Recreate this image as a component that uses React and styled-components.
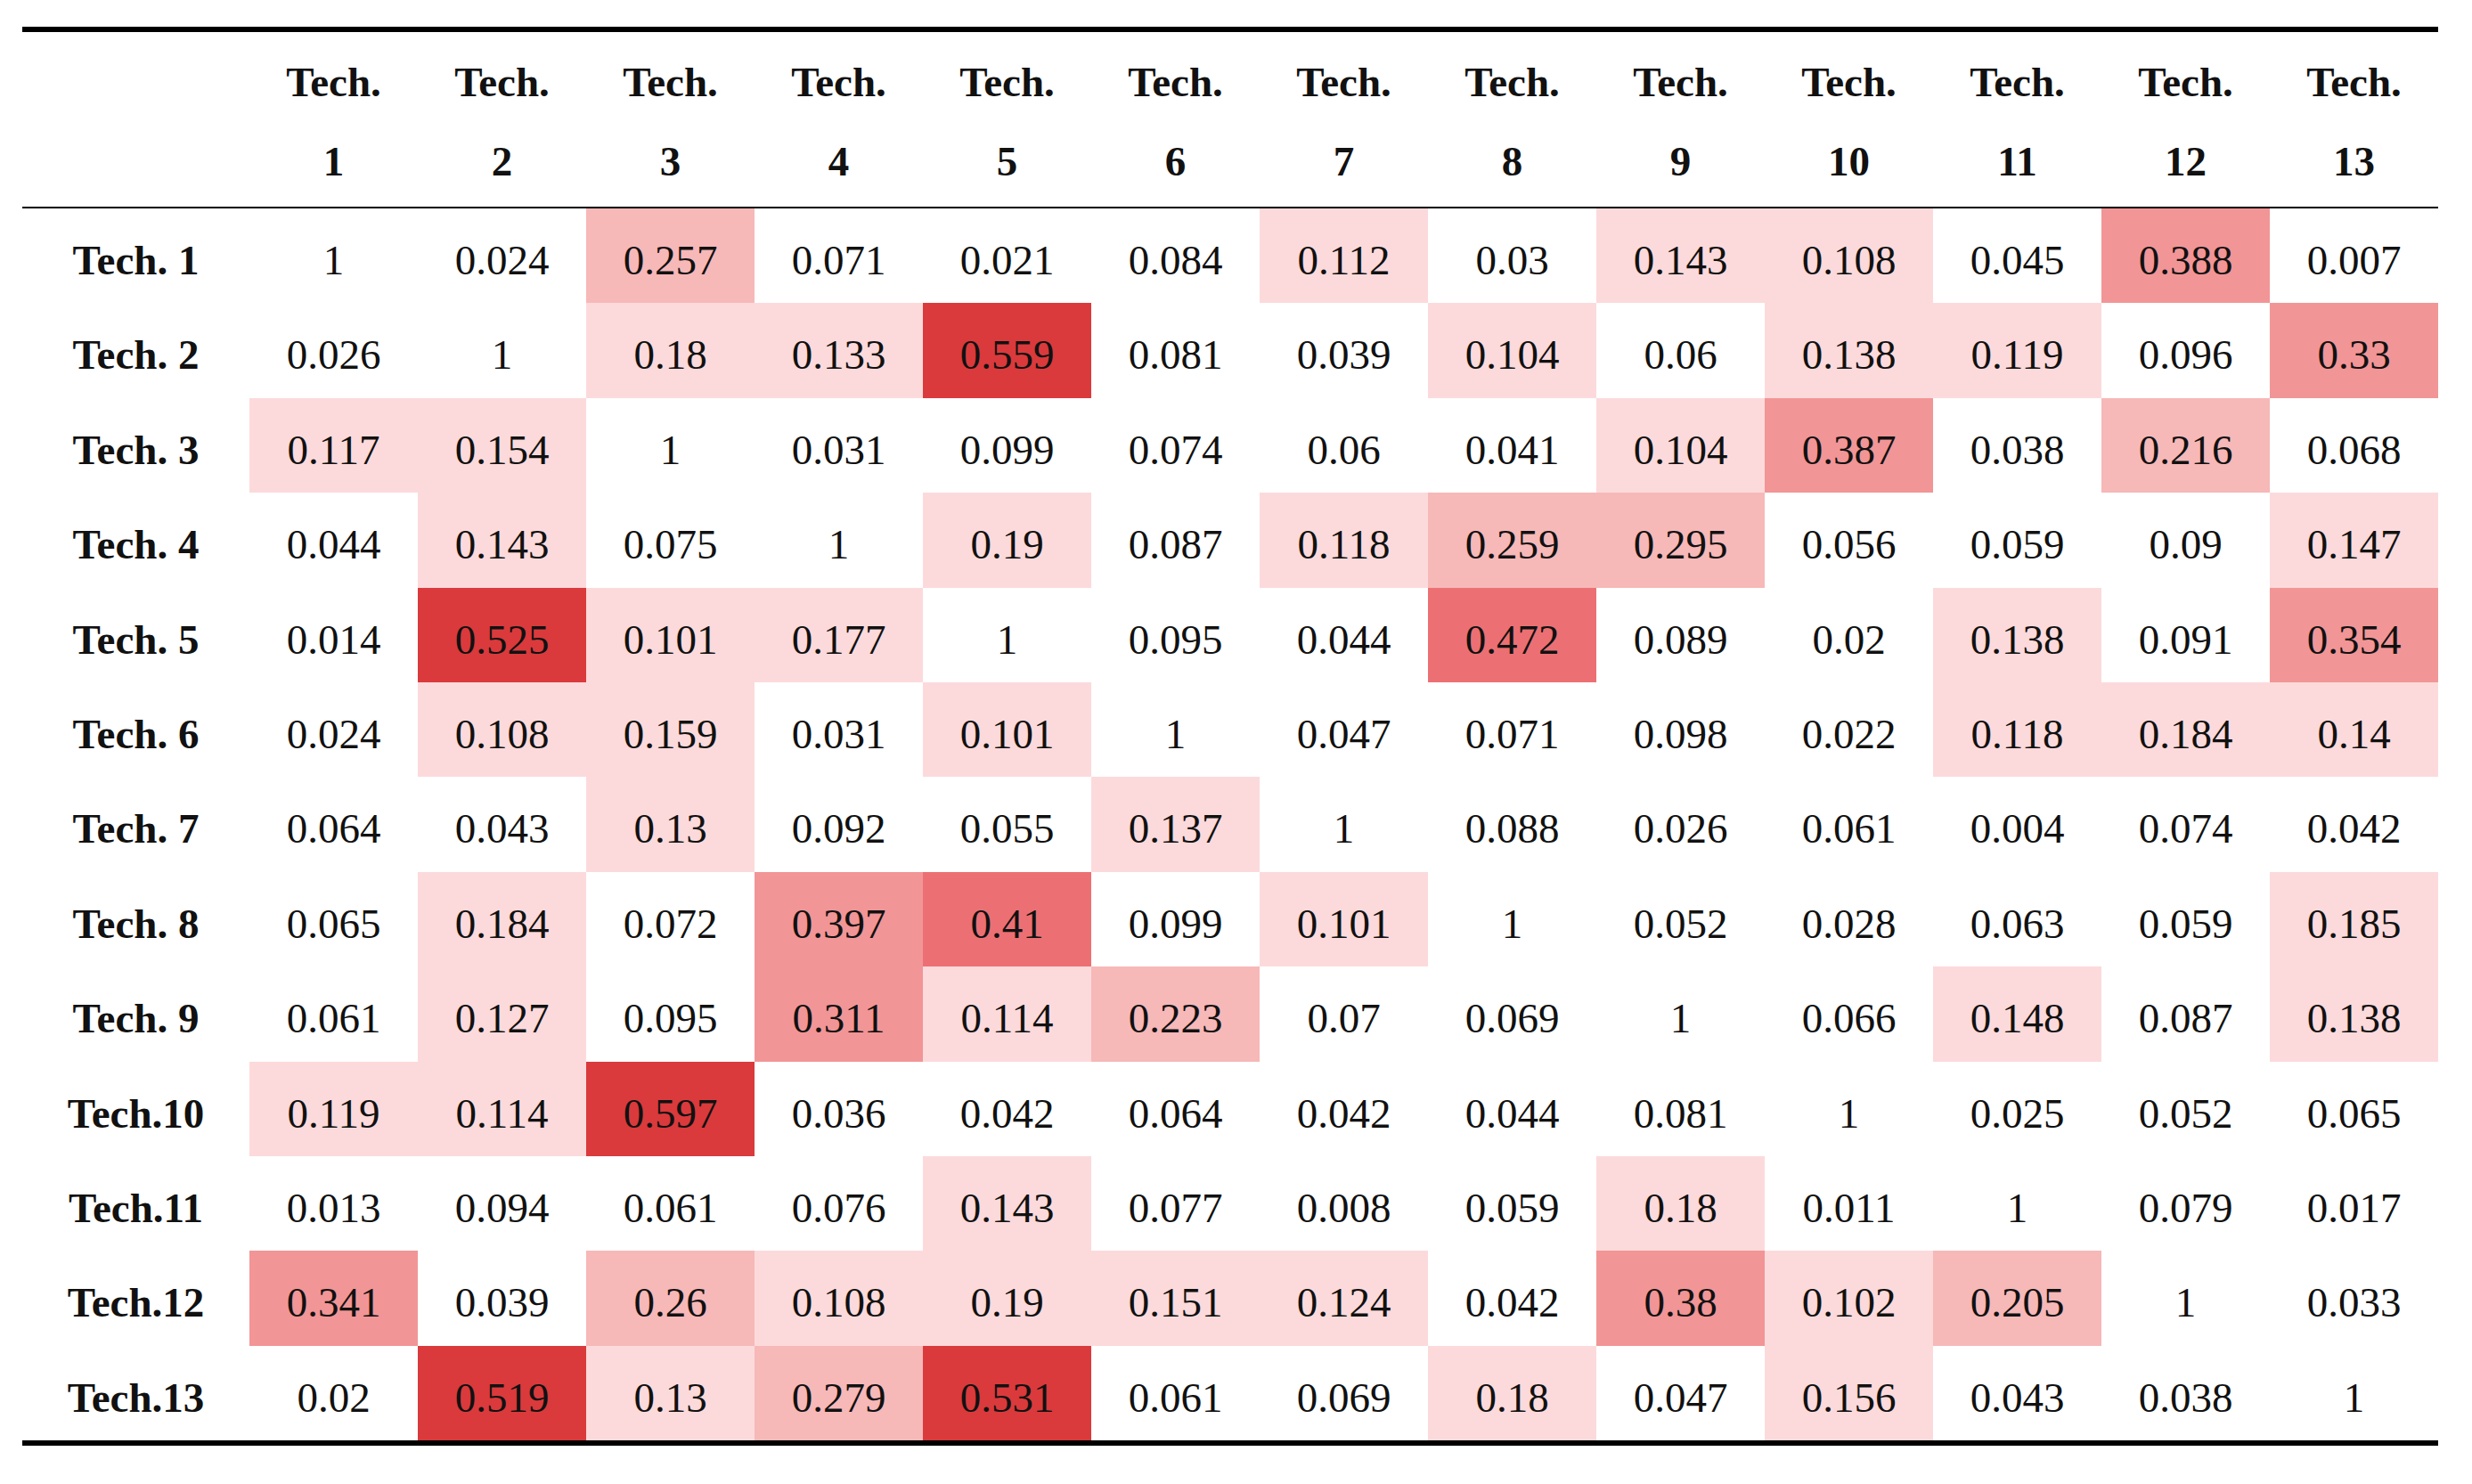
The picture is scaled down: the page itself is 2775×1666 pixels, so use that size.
import React from 'react';
import styled, { createGlobalStyle } from 'styled-components';

const GlobalStyle = createGlobalStyle`
    body {
        margin: 0;
        background: #fff;
    }
`;

const data = [
    [1, 0.024, 0.257, 0.071, 0.021, 0.084, 0.112, 0.03, 0.143, 0.108, 0.045, 0.388, 0.007],
    [0.026, 1, 0.18, 0.133, 0.559, 0.081, 0.039, 0.104, 0.06, 0.138, 0.119, 0.096, 0.33],
    [0.117, 0.154, 1, 0.031, 0.099, 0.074, 0.06, 0.041, 0.104, 0.387, 0.038, 0.216, 0.068],
    [0.044, 0.143, 0.075, 1, 0.19, 0.087, 0.118, 0.259, 0.295, 0.056, 0.059, 0.09, 0.147],
    [0.014, 0.525, 0.101, 0.177, 1, 0.095, 0.044, 0.472, 0.089, 0.02, 0.138, 0.091, 0.354],
    [0.024, 0.108, 0.159, 0.031, 0.101, 1, 0.047, 0.071, 0.098, 0.022, 0.118, 0.184, 0.14],
    [0.064, 0.043, 0.13, 0.092, 0.055, 0.137, 1, 0.088, 0.026, 0.061, 0.004, 0.074, 0.042],
    [0.065, 0.184, 0.072, 0.397, 0.41, 0.099, 0.101, 1, 0.052, 0.028, 0.063, 0.059, 0.185],
    [0.061, 0.127, 0.095, 0.311, 0.114, 0.223, 0.07, 0.069, 1, 0.066, 0.148, 0.087, 0.138],
    [0.119, 0.114, 0.597, 0.036, 0.042, 0.064, 0.042, 0.044, 0.081, 1, 0.025, 0.052, 0.065],
    [0.013, 0.094, 0.061, 0.076, 0.143, 0.077, 0.008, 0.059, 0.18, 0.011, 1, 0.079, 0.017],
    [0.341, 0.039, 0.26, 0.108, 0.19, 0.151, 0.124, 0.042, 0.38, 0.102, 0.205, 1, 0.033],
    [0.02, 0.519, 0.13, 0.279, 0.531, 0.061, 0.069, 0.18, 0.047, 0.156, 0.043, 0.038, 1],
];

// shade by band, the diagonal (1) stays white
function shade(v) {
    if (v >= 1 || v < 0.1) return '#ffffff';
    if (v < 0.2) return '#fcdadb';
    if (v < 0.3) return '#f7b8b8';
    if (v < 0.4) return '#f29596';
    if (v < 0.5) return '#ec7073';
    return '#da3a3c';
}

const rowLabel = (i) => (i < 9 ? `Tech. ${i + 1}` : `Tech.${i + 1}`);

export default function App() {
    return (
        <>
            <GlobalStyle />
            <Page>
                <Table>
                    <HeadRow>
                        <HeadCell />
                        {data.map((_, i) => (
                            <HeadCell key={i}>
                                <span>Tech.</span>
                                <span>{i + 1}</span>
                            </HeadCell>
                        ))}
                    </HeadRow>
                    {data.map((row, r) => (
                        <BodyRow key={r}>
                            <RowLabel>{rowLabel(r)}</RowLabel>
                            {row.map((v, c) => (
                                <Cell key={c} $bg={shade(v)}>{v}</Cell>
                            ))}
                        </BodyRow>
                    ))}
                </Table>
            </Page>
        </>
    );
}

const Page = styled.div`
    padding: 30px 0 0 25px;
    font-family: "Liberation Serif", "Times New Roman", serif;
    color: #111;
`;

const Table = styled.div`
    width: 2712px;
    border-top: 6px solid #000;
    border-bottom: 6px solid #000;
`;

const grid = `
    display: grid;
    grid-template-columns: 255px repeat(13, 189px);
`;

const HeadRow = styled.div`
    ${grid}
    height: 196px;
    border-bottom: 2px solid #000;
`;

const HeadCell = styled.div`
    padding-top: 12px;
    display: flex;
    flex-direction: column;
    align-items: center;
    font-size: 47px;
    font-weight: bold;
    line-height: 89px;
`;

const BodyRow = styled.div`
    ${grid}
    height: 106.4px;
`;

const RowLabel = styled.div`
    padding-top: 10px;
    text-align: center;
    font-size: 47px;
    font-weight: bold;
    line-height: 96.4px;
`;

const Cell = styled.div`
    padding-top: 10px;
    text-align: center;
    font-size: 47px;
    line-height: 96.4px;
    background: ${p => p.$bg};
`;
